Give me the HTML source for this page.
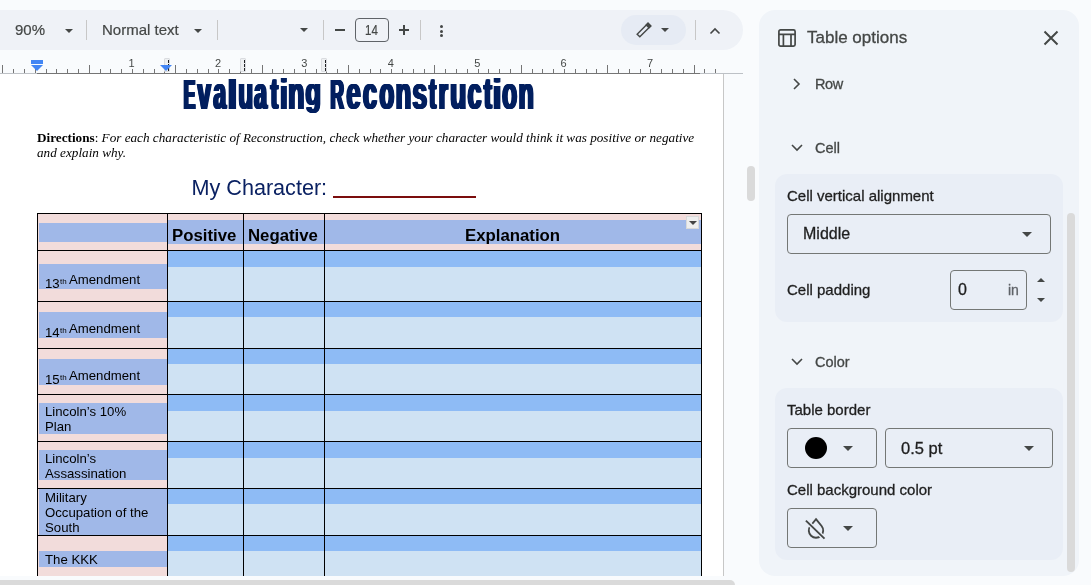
<!DOCTYPE html><html><head><meta charset="utf-8"><style>
*{margin:0;padding:0;box-sizing:border-box}
html,body{width:1091px;height:585px;overflow:hidden;background:#f9fbfd;font-family:"Liberation Sans",sans-serif}
body{position:relative}
.a{position:absolute}
.t{position:absolute;white-space:nowrap;line-height:1}
.sep{position:absolute;width:1px;background:#c7c7c7;top:20px;height:20px}
.tbt{color:#444746;font-size:15px;-webkit-text-stroke:0.2px currentColor}
.arr{position:absolute;width:0;height:0;border-left:4px solid transparent;border-right:4px solid transparent;border-top:4px solid #444746}
.parr{position:absolute;width:0;height:0;border-left:5px solid transparent;border-right:5px solid transparent;border-top:5px solid #444746}
.tick{position:absolute;width:1px;background:#757575}
.rn{position:absolute;font-size:11px;color:#444746;line-height:1}
.colm{position:absolute;width:6px;height:14px;top:58px;background:#eef0f2;border:1px solid #dadce0;border-radius:1px}
.colm:after{content:"";position:absolute;left:3px;top:1px;height:11px;border-left:1px dashed #202124}
.card{position:absolute;background:#e9eef6;border-radius:12px}
.ptxt{position:absolute;white-space:nowrap;line-height:1;color:#1f1f1f;-webkit-text-stroke:0.3px currentColor}
.box{position:absolute;border:1px solid #747775;border-radius:4px}
.cell{position:absolute;overflow:hidden}
.ct{position:absolute;white-space:nowrap;line-height:1;font-size:13px;color:#000}
</style></head><body><div id="root" style="position:absolute;left:0;top:0;width:1091px;height:585px;overflow:hidden;will-change:transform">
<div class="a" style="left:-30px;top:10px;width:773px;height:40px;background:#eff2f7;border-radius:20px"></div>
<div class="t tbt" style="left:15px;top:22.3px">90%</div>
<div class="arr" style="left:65px;top:29px"></div>
<div class="sep" style="left:86px"></div>
<div class="t tbt" style="left:102px;top:22.3px">Normal text</div>
<div class="arr" style="left:194px;top:29px"></div>
<div class="sep" style="left:217px"></div>
<div class="arr" style="left:300px;top:28px"></div>
<div class="sep" style="left:323px"></div>
<div class="a" style="left:335px;top:29px;width:10px;height:2px;background:#444746"></div>
<div class="box" style="left:355px;top:18px;width:34px;height:24px;border-color:#5f6368;border-radius:4px"></div>
<div class="t tbt" style="left:365px;top:22.5px;font-size:14.8px;transform:scaleX(0.78);transform-origin:0 0">14</div>
<div class="a" style="left:399px;top:29px;width:10px;height:2px;background:#444746"></div>
<div class="a" style="left:403px;top:25px;width:2px;height:10px;background:#444746"></div>
<div class="sep" style="left:420px"></div>
<div class="a" style="left:439.5px;top:25px;width:3px;height:3px;border-radius:50%;background:#444746"></div>
<div class="a" style="left:439.5px;top:29.5px;width:3px;height:3px;border-radius:50%;background:#444746"></div>
<div class="a" style="left:439.5px;top:34px;width:3px;height:3px;border-radius:50%;background:#444746"></div>
<div class="a" style="left:621px;top:15px;width:65px;height:30px;border-radius:15px;background:#e6ebf4"></div>
<svg class="a" style="left:635px;top:21px" width="18" height="18" viewBox="0 0 18 18"><g transform="translate(9,9) rotate(-45)"><path d="M-7.8 -1.9 H7.6 V1.9 H-7.8 Z" fill="none" stroke="#444746" stroke-width="1.4"/><rect x="4.4" y="-2.6" width="3.9" height="5.2" fill="#444746"/></g></svg>
<div class="arr" style="left:661px;top:28px"></div>
<div class="sep" style="left:695px"></div>
<svg class="a" style="left:709px;top:26px" width="12" height="10" viewBox="0 0 12 10"><path d="M1.5 7.5 L6 3 L10.5 7.5" fill="none" stroke="#444746" stroke-width="1.6"/></svg>
<div class="a" style="left:0;top:73px;width:743px;height:1px;background:#bdc1c6"></div>
<div class="a" style="left:37px;top:73px;width:663px;height:1px;background:#757575"></div>
<div class="tick" style="left:2px;top:65px;height:8px"></div>
<div class="tick" style="left:13px;top:69px;height:4px"></div>
<div class="tick" style="left:24px;top:69px;height:4px"></div>
<div class="tick" style="left:35px;top:69px;height:4px"></div>
<div class="tick" style="left:46px;top:69px;height:4px"></div>
<div class="tick" style="left:56px;top:69px;height:4px"></div>
<div class="tick" style="left:67px;top:69px;height:4px"></div>
<div class="tick" style="left:78px;top:69px;height:4px"></div>
<div class="tick" style="left:89px;top:65px;height:8px"></div>
<div class="tick" style="left:100px;top:69px;height:4px"></div>
<div class="tick" style="left:110px;top:69px;height:4px"></div>
<div class="tick" style="left:121px;top:69px;height:4px"></div>
<div class="tick" style="left:132px;top:69px;height:4px"></div>
<div class="tick" style="left:143px;top:69px;height:4px"></div>
<div class="tick" style="left:154px;top:69px;height:4px"></div>
<div class="tick" style="left:164px;top:69px;height:4px"></div>
<div class="tick" style="left:175px;top:65px;height:8px"></div>
<div class="tick" style="left:186px;top:69px;height:4px"></div>
<div class="tick" style="left:197px;top:69px;height:4px"></div>
<div class="tick" style="left:208px;top:69px;height:4px"></div>
<div class="tick" style="left:218px;top:69px;height:4px"></div>
<div class="tick" style="left:229px;top:69px;height:4px"></div>
<div class="tick" style="left:240px;top:69px;height:4px"></div>
<div class="tick" style="left:251px;top:69px;height:4px"></div>
<div class="tick" style="left:262px;top:65px;height:8px"></div>
<div class="tick" style="left:272px;top:69px;height:4px"></div>
<div class="tick" style="left:283px;top:69px;height:4px"></div>
<div class="tick" style="left:294px;top:69px;height:4px"></div>
<div class="tick" style="left:305px;top:69px;height:4px"></div>
<div class="tick" style="left:316px;top:69px;height:4px"></div>
<div class="tick" style="left:326px;top:69px;height:4px"></div>
<div class="tick" style="left:337px;top:69px;height:4px"></div>
<div class="tick" style="left:348px;top:65px;height:8px"></div>
<div class="tick" style="left:359px;top:69px;height:4px"></div>
<div class="tick" style="left:370px;top:69px;height:4px"></div>
<div class="tick" style="left:380px;top:69px;height:4px"></div>
<div class="tick" style="left:391px;top:69px;height:4px"></div>
<div class="tick" style="left:402px;top:69px;height:4px"></div>
<div class="tick" style="left:413px;top:69px;height:4px"></div>
<div class="tick" style="left:424px;top:69px;height:4px"></div>
<div class="tick" style="left:434px;top:65px;height:8px"></div>
<div class="tick" style="left:445px;top:69px;height:4px"></div>
<div class="tick" style="left:456px;top:69px;height:4px"></div>
<div class="tick" style="left:467px;top:69px;height:4px"></div>
<div class="tick" style="left:478px;top:69px;height:4px"></div>
<div class="tick" style="left:488px;top:69px;height:4px"></div>
<div class="tick" style="left:499px;top:69px;height:4px"></div>
<div class="tick" style="left:510px;top:69px;height:4px"></div>
<div class="tick" style="left:521px;top:65px;height:8px"></div>
<div class="tick" style="left:532px;top:69px;height:4px"></div>
<div class="tick" style="left:542px;top:69px;height:4px"></div>
<div class="tick" style="left:553px;top:69px;height:4px"></div>
<div class="tick" style="left:564px;top:69px;height:4px"></div>
<div class="tick" style="left:575px;top:69px;height:4px"></div>
<div class="tick" style="left:586px;top:69px;height:4px"></div>
<div class="tick" style="left:596px;top:69px;height:4px"></div>
<div class="tick" style="left:607px;top:65px;height:8px"></div>
<div class="tick" style="left:618px;top:69px;height:4px"></div>
<div class="tick" style="left:629px;top:69px;height:4px"></div>
<div class="tick" style="left:640px;top:69px;height:4px"></div>
<div class="tick" style="left:650px;top:69px;height:4px"></div>
<div class="tick" style="left:661px;top:69px;height:4px"></div>
<div class="tick" style="left:672px;top:69px;height:4px"></div>
<div class="tick" style="left:683px;top:69px;height:4px"></div>
<div class="tick" style="left:694px;top:65px;height:8px"></div>
<div class="tick" style="left:704px;top:69px;height:4px"></div>
<div class="tick" style="left:715px;top:69px;height:4px"></div>
<div class="rn" style="left:132.5px;top:58px;width:12px;margin-left:-6.9px;text-align:center">1</div>
<div class="rn" style="left:218.9px;top:58px;width:12px;margin-left:-6.9px;text-align:center">2</div>
<div class="rn" style="left:305.3px;top:58px;width:12px;margin-left:-6.9px;text-align:center">3</div>
<div class="rn" style="left:391.7px;top:58px;width:12px;margin-left:-6.9px;text-align:center">4</div>
<div class="rn" style="left:478.1px;top:58px;width:12px;margin-left:-6.9px;text-align:center">5</div>
<div class="rn" style="left:564.5px;top:58px;width:12px;margin-left:-6.9px;text-align:center">6</div>
<div class="rn" style="left:650.9px;top:58px;width:12px;margin-left:-6.9px;text-align:center">7</div>
<div class="colm" style="left:164px"></div>
<div class="colm" style="left:240px"></div>
<div class="colm" style="left:321px"></div>
<div class="a" style="left:31px;top:60px;width:12px;height:4px;background:#4285f4"></div>
<div class="a" style="left:31px;top:65px;width:0;height:0;border-left:6px solid transparent;border-right:6px solid transparent;border-top:6px solid #4285f4"></div>
<div class="a" style="left:160px;top:65px;width:0;height:0;border-left:6px solid transparent;border-right:6px solid transparent;border-top:6px solid #4285f4"></div>
<div class="a" style="left:0;top:74px;width:723px;height:502px;background:#fff"></div>
<div class="a" style="left:723px;top:74px;width:1px;height:502px;background:#c7c7c7"></div>
<svg class="a" style="left:0;top:0" width="600" height="130" viewBox="0 0 600 130"><g fill="#021f5f" font-family="Liberation Sans" font-weight="bold" font-size="100"><text transform="matrix(0.17168 0 0 0.42174 182.584 108.700)">E</text><text transform="matrix(0.17168 0 0 0.42174 183.044 108.700)">E</text><text transform="matrix(0.17168 0 0 0.42174 183.504 108.700)">E</text><text transform="matrix(0.17168 0 0 0.42174 183.964 108.700)">E</text><text transform="matrix(0.17168 0 0 0.42174 184.424 108.700)">E</text><text transform="matrix(0.17168 0 0 0.42174 184.884 108.700)">E</text><text transform="matrix(0.23853 0 0 0.46226 196.381 108.700)">v</text><text transform="matrix(0.23853 0 0 0.46226 196.841 108.700)">v</text><text transform="matrix(0.23853 0 0 0.46226 197.301 108.700)">v</text><text transform="matrix(0.23853 0 0 0.46226 197.761 108.700)">v</text><text transform="matrix(0.23853 0 0 0.46226 198.221 108.700)">v</text><text transform="matrix(0.23853 0 0 0.46226 198.681 108.700)">v</text><text transform="matrix(0.22830 0 0 0.45455 212.315 108.545)">a</text><text transform="matrix(0.22830 0 0 0.45455 212.775 108.545)">a</text><text transform="matrix(0.22830 0 0 0.45455 213.235 108.545)">a</text><text transform="matrix(0.22830 0 0 0.45455 213.695 108.545)">a</text><text transform="matrix(0.22830 0 0 0.45455 214.155 108.545)">a</text><text transform="matrix(0.22830 0 0 0.45455 214.615 108.545)">a</text><text transform="matrix(0.37778 0 0 0.40000 226.056 108.700)">l</text><text transform="matrix(0.37778 0 0 0.40000 226.516 108.700)">l</text><text transform="matrix(0.37778 0 0 0.40000 226.976 108.700)">l</text><text transform="matrix(0.37778 0 0 0.40000 227.436 108.700)">l</text><text transform="matrix(0.37778 0 0 0.40000 227.896 108.700)">l</text><text transform="matrix(0.37778 0 0 0.40000 228.356 108.700)">l</text><text transform="matrix(0.24124 0 0 0.46296 237.153 108.537)">u</text><text transform="matrix(0.24124 0 0 0.46296 237.613 108.537)">u</text><text transform="matrix(0.24124 0 0 0.46296 238.073 108.537)">u</text><text transform="matrix(0.24124 0 0 0.46296 238.533 108.537)">u</text><text transform="matrix(0.24124 0 0 0.46296 238.993 108.537)">u</text><text transform="matrix(0.24124 0 0 0.46296 239.453 108.537)">u</text><text transform="matrix(0.22830 0 0 0.45455 253.115 108.545)">a</text><text transform="matrix(0.22830 0 0 0.45455 253.575 108.545)">a</text><text transform="matrix(0.22830 0 0 0.45455 254.035 108.545)">a</text><text transform="matrix(0.22830 0 0 0.45455 254.495 108.545)">a</text><text transform="matrix(0.22830 0 0 0.45455 254.955 108.545)">a</text><text transform="matrix(0.22830 0 0 0.45455 255.415 108.545)">a</text><text transform="matrix(0.21935 0 0 0.44060 269.581 108.559)">t</text><text transform="matrix(0.21935 0 0 0.44060 270.041 108.559)">t</text><text transform="matrix(0.21935 0 0 0.44060 270.501 108.559)">t</text><text transform="matrix(0.21935 0 0 0.44060 270.961 108.559)">t</text><text transform="matrix(0.21935 0 0 0.44060 271.421 108.559)">t</text><text transform="matrix(0.21935 0 0 0.44060 271.881 108.559)">t</text><text transform="matrix(0.25926 0 0 0.42207 279.085 108.700)">i</text><text transform="matrix(0.25926 0 0 0.42207 279.545 108.700)">i</text><text transform="matrix(0.25926 0 0 0.42207 280.005 108.700)">i</text><text transform="matrix(0.25926 0 0 0.42207 280.465 108.700)">i</text><text transform="matrix(0.25926 0 0 0.42207 280.925 108.700)">i</text><text transform="matrix(0.25926 0 0 0.42207 281.385 108.700)">i</text><text transform="matrix(0.26598 0 0 0.45370 287.071 108.700)">n</text><text transform="matrix(0.26598 0 0 0.45370 287.531 108.700)">n</text><text transform="matrix(0.26598 0 0 0.45370 287.991 108.700)">n</text><text transform="matrix(0.26598 0 0 0.45370 288.451 108.700)">n</text><text transform="matrix(0.26598 0 0 0.45370 288.911 108.700)">n</text><text transform="matrix(0.26598 0 0 0.45370 289.371 108.700)">n</text><text transform="matrix(0.25545 0 0 0.38267 304.278 104.664)">g</text><text transform="matrix(0.25545 0 0 0.38267 304.738 104.664)">g</text><text transform="matrix(0.25545 0 0 0.38267 305.198 104.664)">g</text><text transform="matrix(0.25545 0 0 0.38267 305.658 104.664)">g</text><text transform="matrix(0.25545 0 0 0.38267 306.118 104.664)">g</text><text transform="matrix(0.25545 0 0 0.38267 306.578 104.664)">g</text><text transform="matrix(0.18898 0 0 0.42174 329.272 108.700)">R</text><text transform="matrix(0.18898 0 0 0.42174 329.732 108.700)">R</text><text transform="matrix(0.18898 0 0 0.42174 330.192 108.700)">R</text><text transform="matrix(0.18898 0 0 0.42174 330.652 108.700)">R</text><text transform="matrix(0.18898 0 0 0.42174 331.112 108.700)">R</text><text transform="matrix(0.18898 0 0 0.42174 331.572 108.700)">R</text><text transform="matrix(0.25625 0 0 0.45455 345.275 108.545)">e</text><text transform="matrix(0.25625 0 0 0.45455 345.735 108.545)">e</text><text transform="matrix(0.25625 0 0 0.45455 346.195 108.545)">e</text><text transform="matrix(0.25625 0 0 0.45455 346.655 108.545)">e</text><text transform="matrix(0.25625 0 0 0.45455 347.115 108.545)">e</text><text transform="matrix(0.25625 0 0 0.45455 347.575 108.545)">e</text><text transform="matrix(0.25361 0 0 0.45455 361.786 108.545)">c</text><text transform="matrix(0.25361 0 0 0.45455 362.246 108.545)">c</text><text transform="matrix(0.25361 0 0 0.45455 362.706 108.545)">c</text><text transform="matrix(0.25361 0 0 0.45455 363.166 108.545)">c</text><text transform="matrix(0.25361 0 0 0.45455 363.626 108.545)">c</text><text transform="matrix(0.25361 0 0 0.45455 364.086 108.545)">c</text><text transform="matrix(0.23962 0 0 0.45455 378.342 108.545)">o</text><text transform="matrix(0.23962 0 0 0.45455 378.802 108.545)">o</text><text transform="matrix(0.23962 0 0 0.45455 379.262 108.545)">o</text><text transform="matrix(0.23962 0 0 0.45455 379.722 108.545)">o</text><text transform="matrix(0.23962 0 0 0.45455 380.182 108.545)">o</text><text transform="matrix(0.23962 0 0 0.45455 380.642 108.545)">o</text><text transform="matrix(0.25567 0 0 0.45370 394.438 108.700)">n</text><text transform="matrix(0.25567 0 0 0.45370 394.898 108.700)">n</text><text transform="matrix(0.25567 0 0 0.45370 395.358 108.700)">n</text><text transform="matrix(0.25567 0 0 0.45370 395.818 108.700)">n</text><text transform="matrix(0.25567 0 0 0.45370 396.278 108.700)">n</text><text transform="matrix(0.25567 0 0 0.45370 396.738 108.700)">n</text><text transform="matrix(0.26667 0 0 0.45455 411.167 108.545)">s</text><text transform="matrix(0.26667 0 0 0.45455 411.627 108.545)">s</text><text transform="matrix(0.26667 0 0 0.45455 412.087 108.545)">s</text><text transform="matrix(0.26667 0 0 0.45455 412.547 108.545)">s</text><text transform="matrix(0.26667 0 0 0.45455 413.007 108.545)">s</text><text transform="matrix(0.26667 0 0 0.45455 413.467 108.545)">s</text><text transform="matrix(0.21290 0 0 0.44060 427.987 108.559)">t</text><text transform="matrix(0.21290 0 0 0.44060 428.447 108.559)">t</text><text transform="matrix(0.21290 0 0 0.44060 428.907 108.559)">t</text><text transform="matrix(0.21290 0 0 0.44060 429.367 108.559)">t</text><text transform="matrix(0.21290 0 0 0.44060 429.827 108.559)">t</text><text transform="matrix(0.21290 0 0 0.44060 430.287 108.559)">t</text><text transform="matrix(0.23548 0 0 0.45370 437.569 108.700)">r</text><text transform="matrix(0.23548 0 0 0.45370 438.029 108.700)">r</text><text transform="matrix(0.23548 0 0 0.45370 438.489 108.700)">r</text><text transform="matrix(0.23548 0 0 0.45370 438.949 108.700)">r</text><text transform="matrix(0.23548 0 0 0.45370 439.409 108.700)">r</text><text transform="matrix(0.23548 0 0 0.45370 439.869 108.700)">r</text><text transform="matrix(0.26598 0 0 0.46296 448.904 108.537)">u</text><text transform="matrix(0.26598 0 0 0.46296 449.364 108.537)">u</text><text transform="matrix(0.26598 0 0 0.46296 449.824 108.537)">u</text><text transform="matrix(0.26598 0 0 0.46296 450.284 108.537)">u</text><text transform="matrix(0.26598 0 0 0.46296 450.744 108.537)">u</text><text transform="matrix(0.26598 0 0 0.46296 451.204 108.537)">u</text><text transform="matrix(0.24948 0 0 0.45455 466.402 108.545)">c</text><text transform="matrix(0.24948 0 0 0.45455 466.862 108.545)">c</text><text transform="matrix(0.24948 0 0 0.45455 467.322 108.545)">c</text><text transform="matrix(0.24948 0 0 0.45455 467.782 108.545)">c</text><text transform="matrix(0.24948 0 0 0.45455 468.242 108.545)">c</text><text transform="matrix(0.24948 0 0 0.45455 468.702 108.545)">c</text><text transform="matrix(0.23226 0 0 0.44060 482.868 108.559)">t</text><text transform="matrix(0.23226 0 0 0.44060 483.328 108.559)">t</text><text transform="matrix(0.23226 0 0 0.44060 483.788 108.559)">t</text><text transform="matrix(0.23226 0 0 0.44060 484.248 108.559)">t</text><text transform="matrix(0.23226 0 0 0.44060 484.708 108.559)">t</text><text transform="matrix(0.23226 0 0 0.44060 485.168 108.559)">t</text><text transform="matrix(0.31852 0 0 0.42207 491.570 108.700)">i</text><text transform="matrix(0.31852 0 0 0.42207 492.030 108.700)">i</text><text transform="matrix(0.31852 0 0 0.42207 492.490 108.700)">i</text><text transform="matrix(0.31852 0 0 0.42207 492.950 108.700)">i</text><text transform="matrix(0.31852 0 0 0.42207 493.410 108.700)">i</text><text transform="matrix(0.31852 0 0 0.42207 493.870 108.700)">i</text><text transform="matrix(0.24528 0 0 0.45455 501.019 108.545)">o</text><text transform="matrix(0.24528 0 0 0.45455 501.479 108.545)">o</text><text transform="matrix(0.24528 0 0 0.45455 501.939 108.545)">o</text><text transform="matrix(0.24528 0 0 0.45455 502.399 108.545)">o</text><text transform="matrix(0.24528 0 0 0.45455 502.859 108.545)">o</text><text transform="matrix(0.24528 0 0 0.45455 503.319 108.545)">o</text><text transform="matrix(0.24948 0 0 0.45370 517.378 108.700)">n</text><text transform="matrix(0.24948 0 0 0.45370 517.838 108.700)">n</text><text transform="matrix(0.24948 0 0 0.45370 518.298 108.700)">n</text><text transform="matrix(0.24948 0 0 0.45370 518.758 108.700)">n</text><text transform="matrix(0.24948 0 0 0.45370 519.218 108.700)">n</text><text transform="matrix(0.24948 0 0 0.45370 519.678 108.700)">n</text></g></svg>
<div class="t" style="left:37px;top:130px;font-family:'Liberation Serif',serif;font-size:13.2px;line-height:15px;color:#000"><b>Directions</b>: <i>For each characteristic of Reconstruction, check whether your character would think it was positive or negative</i><br><i>and explain why.</i></div>
<div class="t" style="left:191.5px;top:177px;font-size:21.6px;color:#0a2162">My Character:</div>
<div class="a" style="left:333px;top:196px;width:143px;height:2px;background:#7b0d0d"></div>
<div class="cell" style="left:38px;top:214px;width:129px;height:36px;background:#f2dcdb"></div>
<div class="cell" style="left:39px;top:223px;width:128px;height:19px;background:#a0b8e8"></div>
<div class="cell" style="left:168px;top:214px;width:75px;height:36px;background:#f2dcdb"></div>
<div class="cell" style="left:168px;top:220px;width:75px;height:24px;background:#a0b8e8"></div>
<div class="cell" style="left:244px;top:214px;width:80px;height:36px;background:#f2dcdb"></div>
<div class="cell" style="left:244px;top:220px;width:80px;height:24px;background:#a0b8e8"></div>
<div class="cell" style="left:325px;top:214px;width:376px;height:36px;background:#f2dcdb"></div>
<div class="cell" style="left:325px;top:220px;width:376px;height:24px;background:#a0b8e8"></div>
<div class="cell" style="left:38px;top:251px;width:129px;height:50px;background:#f2dcdb"></div>
<div class="cell" style="left:39px;top:264px;width:128px;height:25px;background:#a0b8e8"></div>
<div class="cell" style="left:168px;top:251px;width:75px;height:50px;background:#cfe2f3"></div>
<div class="cell" style="left:168px;top:251px;width:75px;height:16px;background:#8ebbf5"></div>
<div class="cell" style="left:244px;top:251px;width:80px;height:50px;background:#cfe2f3"></div>
<div class="cell" style="left:244px;top:251px;width:80px;height:16px;background:#8ebbf5"></div>
<div class="cell" style="left:325px;top:251px;width:376px;height:50px;background:#cfe2f3"></div>
<div class="cell" style="left:325px;top:251px;width:376px;height:16px;background:#8ebbf5"></div>
<div class="cell" style="left:38px;top:302px;width:129px;height:46px;background:#f2dcdb"></div>
<div class="cell" style="left:39px;top:312px;width:128px;height:26px;background:#a0b8e8"></div>
<div class="cell" style="left:168px;top:302px;width:75px;height:46px;background:#cfe2f3"></div>
<div class="cell" style="left:168px;top:302px;width:75px;height:15px;background:#8ebbf5"></div>
<div class="cell" style="left:244px;top:302px;width:80px;height:46px;background:#cfe2f3"></div>
<div class="cell" style="left:244px;top:302px;width:80px;height:15px;background:#8ebbf5"></div>
<div class="cell" style="left:325px;top:302px;width:376px;height:46px;background:#cfe2f3"></div>
<div class="cell" style="left:325px;top:302px;width:376px;height:15px;background:#8ebbf5"></div>
<div class="cell" style="left:38px;top:349px;width:129px;height:45px;background:#f2dcdb"></div>
<div class="cell" style="left:39px;top:359px;width:128px;height:26px;background:#a0b8e8"></div>
<div class="cell" style="left:168px;top:349px;width:75px;height:45px;background:#cfe2f3"></div>
<div class="cell" style="left:168px;top:349px;width:75px;height:15px;background:#8ebbf5"></div>
<div class="cell" style="left:244px;top:349px;width:80px;height:45px;background:#cfe2f3"></div>
<div class="cell" style="left:244px;top:349px;width:80px;height:15px;background:#8ebbf5"></div>
<div class="cell" style="left:325px;top:349px;width:376px;height:45px;background:#cfe2f3"></div>
<div class="cell" style="left:325px;top:349px;width:376px;height:15px;background:#8ebbf5"></div>
<div class="cell" style="left:38px;top:395px;width:129px;height:46px;background:#f2dcdb"></div>
<div class="cell" style="left:39px;top:403px;width:128px;height:31px;background:#a0b8e8"></div>
<div class="cell" style="left:168px;top:395px;width:75px;height:46px;background:#cfe2f3"></div>
<div class="cell" style="left:168px;top:395px;width:75px;height:16px;background:#8ebbf5"></div>
<div class="cell" style="left:244px;top:395px;width:80px;height:46px;background:#cfe2f3"></div>
<div class="cell" style="left:244px;top:395px;width:80px;height:16px;background:#8ebbf5"></div>
<div class="cell" style="left:325px;top:395px;width:376px;height:46px;background:#cfe2f3"></div>
<div class="cell" style="left:325px;top:395px;width:376px;height:16px;background:#8ebbf5"></div>
<div class="cell" style="left:38px;top:442px;width:129px;height:46px;background:#f2dcdb"></div>
<div class="cell" style="left:39px;top:450px;width:128px;height:30px;background:#a0b8e8"></div>
<div class="cell" style="left:168px;top:442px;width:75px;height:46px;background:#cfe2f3"></div>
<div class="cell" style="left:168px;top:442px;width:75px;height:16px;background:#8ebbf5"></div>
<div class="cell" style="left:244px;top:442px;width:80px;height:46px;background:#cfe2f3"></div>
<div class="cell" style="left:244px;top:442px;width:80px;height:16px;background:#8ebbf5"></div>
<div class="cell" style="left:325px;top:442px;width:376px;height:46px;background:#cfe2f3"></div>
<div class="cell" style="left:325px;top:442px;width:376px;height:16px;background:#8ebbf5"></div>
<div class="cell" style="left:38px;top:489px;width:129px;height:46px;background:#f2dcdb"></div>
<div class="cell" style="left:39px;top:489px;width:128px;height:46px;background:#a0b8e8"></div>
<div class="cell" style="left:168px;top:489px;width:75px;height:46px;background:#cfe2f3"></div>
<div class="cell" style="left:168px;top:489px;width:75px;height:15px;background:#8ebbf5"></div>
<div class="cell" style="left:244px;top:489px;width:80px;height:46px;background:#cfe2f3"></div>
<div class="cell" style="left:244px;top:489px;width:80px;height:15px;background:#8ebbf5"></div>
<div class="cell" style="left:325px;top:489px;width:376px;height:46px;background:#cfe2f3"></div>
<div class="cell" style="left:325px;top:489px;width:376px;height:15px;background:#8ebbf5"></div>
<div class="cell" style="left:38px;top:536px;width:129px;height:64px;background:#f2dcdb"></div>
<div class="cell" style="left:39px;top:551px;width:128px;height:16px;background:#a0b8e8"></div>
<div class="cell" style="left:168px;top:536px;width:75px;height:64px;background:#cfe2f3"></div>
<div class="cell" style="left:168px;top:536px;width:75px;height:15px;background:#8ebbf5"></div>
<div class="cell" style="left:244px;top:536px;width:80px;height:64px;background:#cfe2f3"></div>
<div class="cell" style="left:244px;top:536px;width:80px;height:15px;background:#8ebbf5"></div>
<div class="cell" style="left:325px;top:536px;width:376px;height:64px;background:#cfe2f3"></div>
<div class="cell" style="left:325px;top:536px;width:376px;height:15px;background:#8ebbf5"></div>
<div class="a" style="left:37px;top:213px;width:665px;height:1px;background:#000"></div>
<div class="a" style="left:37px;top:250px;width:665px;height:1px;background:#000"></div>
<div class="a" style="left:37px;top:301px;width:665px;height:1px;background:#000"></div>
<div class="a" style="left:37px;top:348px;width:665px;height:1px;background:#000"></div>
<div class="a" style="left:37px;top:394px;width:665px;height:1px;background:#000"></div>
<div class="a" style="left:37px;top:441px;width:665px;height:1px;background:#000"></div>
<div class="a" style="left:37px;top:488px;width:665px;height:1px;background:#000"></div>
<div class="a" style="left:37px;top:535px;width:665px;height:1px;background:#000"></div>
<div class="a" style="left:37px;top:213px;width:1px;height:363px;background:#000"></div>
<div class="a" style="left:167px;top:213px;width:1px;height:363px;background:#000"></div>
<div class="a" style="left:243px;top:213px;width:1px;height:363px;background:#000"></div>
<div class="a" style="left:324px;top:213px;width:1px;height:363px;background:#000"></div>
<div class="a" style="left:701px;top:213px;width:1px;height:363px;background:#000"></div>
<div class="t" style="left:172px;top:228px;font-size:16.8px;font-weight:bold">Positive</div>
<div class="t" style="left:248px;top:228px;font-size:16.8px;font-weight:bold">Negative</div>
<div class="t" style="left:465px;top:228px;font-size:16.8px;font-weight:bold">Explanation</div>
<div class="a" style="left:686px;top:216px;width:13px;height:13px;background:#eeeeee;border:1px solid #d9d9d9"></div>
<div class="a" style="left:688.5px;top:221px;width:0;height:0;border-left:4px solid transparent;border-right:4px solid transparent;border-top:4.3px solid #444"></div>
<div class="t ct" style="left:45px;top:277px;font-size:13.2px">13</div>
<div class="t ct" style="left:60px;top:278px;font-size:8px">th</div>
<div class="t ct" style="left:69px;top:273px;font-size:13.2px">Amendment</div>
<div class="t ct" style="left:45px;top:326px;font-size:13.2px">14</div>
<div class="t ct" style="left:60px;top:327px;font-size:8px">th</div>
<div class="t ct" style="left:69px;top:322px;font-size:13.2px">Amendment</div>
<div class="t ct" style="left:45px;top:373px;font-size:13.2px">15</div>
<div class="t ct" style="left:60px;top:374px;font-size:8px">th</div>
<div class="t ct" style="left:69px;top:369px;font-size:13.2px">Amendment</div>
<div class="t ct" style="left:45px;top:404px;font-size:13.2px;line-height:15px">Lincoln’s 10%<br>Plan</div>
<div class="t ct" style="left:45px;top:451px;font-size:13.2px;line-height:15px">Lincoln’s<br>Assassination</div>
<div class="t ct" style="left:45px;top:490px;font-size:13.2px;line-height:15px">Military<br>Occupation of the<br>South</div>
<div class="t ct" style="left:45px;top:553px;font-size:13.2px">The KKK</div>
<div class="a" style="left:0;top:576px;width:759px;height:9px;background:#f9fbfd"></div>
<div class="a" style="left:-10px;top:580px;width:745px;height:10px;background:#dadada;border-radius:5px"></div>
<div class="a" style="left:747px;top:166px;width:8px;height:35px;background:#dadada;border-radius:4px"></div>
<div class="a" style="left:759px;top:10px;width:320px;height:566px;background:#f0f4f9;border-radius:16px"></div>
<svg class="a" style="left:777px;top:28px" width="20" height="20" viewBox="0 0 20 20"><rect x="1.9" y="1.9" width="16.2" height="16.2" rx="1.6" fill="none" stroke="#444746" stroke-width="1.7"/><path d="M1.9 6.3 H18.1 M6.4 6.3 V18 M14 6.3 V18" stroke="#444746" stroke-width="1.7" fill="none"/></svg>
<div class="ptxt" style="left:807px;top:29px;font-size:17px;color:#444746">Table options</div>
<svg class="a" style="left:1043px;top:30px" width="16" height="16" viewBox="0 0 16 16"><path d="M1.5 1.5 L14.5 14.5 M14.5 1.5 L1.5 14.5" stroke="#444746" stroke-width="2" fill="none"/></svg>
<svg class="a" style="left:790px;top:76px" width="12" height="16" viewBox="0 0 12 16"><path d="M4 3 L9 8 L4 13" stroke="#444746" stroke-width="1.6" fill="none"/></svg>
<div class="ptxt" style="left:815px;top:77px;font-size:14.5px;color:#444746;letter-spacing:-0.4px">Row</div>
<svg class="a" style="left:789px;top:141px" width="16" height="12" viewBox="0 0 16 12"><path d="M3 4 L8 9 L13 4" stroke="#444746" stroke-width="1.6" fill="none"/></svg>
<div class="ptxt" style="left:815px;top:141px;font-size:14.5px;color:#444746">Cell</div>
<div class="card" style="left:775px;top:174px;width:288px;height:148px"></div>
<div class="ptxt" style="left:787px;top:188px;font-size:15px">Cell vertical alignment</div>
<div class="box" style="left:787px;top:214px;width:264px;height:40px"></div>
<div class="ptxt" style="left:803px;top:226px;font-size:16px">Middle</div>
<div class="parr" style="left:1022px;top:232px"></div>
<div class="ptxt" style="left:787px;top:282px;font-size:15px">Cell padding</div>
<div class="box" style="left:950px;top:270px;width:77px;height:40px"></div>
<div class="ptxt" style="left:958px;top:282px;font-size:16px;color:#1f1f1f">0</div>
<div class="ptxt" style="left:1008px;top:283px;font-size:14px;color:#5f6368">in</div>
<div class="a" style="left:1036.5px;top:277.5px;width:0;height:0;border-left:4.5px solid transparent;border-right:4.5px solid transparent;border-bottom:4.5px solid #444746"></div>
<div class="a" style="left:1036.5px;top:298px;width:0;height:0;border-left:4.5px solid transparent;border-right:4.5px solid transparent;border-top:4.5px solid #444746"></div>
<svg class="a" style="left:789px;top:355px" width="16" height="12" viewBox="0 0 16 12"><path d="M3 4 L8 9 L13 4" stroke="#444746" stroke-width="1.6" fill="none"/></svg>
<div class="ptxt" style="left:815px;top:355px;font-size:14.5px;color:#444746">Color</div>
<div class="card" style="left:775px;top:388px;width:288px;height:172px"></div>
<div class="ptxt" style="left:787px;top:402px;font-size:15px">Table border</div>
<div class="box" style="left:787px;top:428px;width:90px;height:40px"></div>
<div class="a" style="left:805px;top:437px;width:22px;height:22px;border-radius:50%;background:#000"></div>
<div class="parr" style="left:843px;top:445.5px"></div>
<div class="box" style="left:885px;top:428px;width:168px;height:40px"></div>
<div class="ptxt" style="left:901px;top:439.5px;font-size:16.5px">0.5 pt</div>
<div class="parr" style="left:1024px;top:445.5px"></div>
<div class="ptxt" style="left:787px;top:482px;font-size:15px">Cell background color</div>
<div class="box" style="left:787px;top:508px;width:90px;height:40px"></div>
<svg class="a" style="left:803px;top:516px" width="26" height="26" viewBox="0 0 26 26"><path d="M13 3.2 L18.6 10 A7.2 7.2 0 1 1 7.4 10 Z" fill="none" stroke="#444746" stroke-width="1.9" stroke-linejoin="miter"/><path d="M2.9 4.6 L21.5 22.6" stroke="#e9eef6" stroke-width="4.5"/><path d="M2.9 4.6 L21.5 22.6" stroke="#444746" stroke-width="1.9"/></svg>
<div class="parr" style="left:843px;top:526px"></div>
<div class="a" style="left:1067px;top:213px;width:8px;height:359px;background:#dadada;border-radius:4px"></div>
</div></body></html>
